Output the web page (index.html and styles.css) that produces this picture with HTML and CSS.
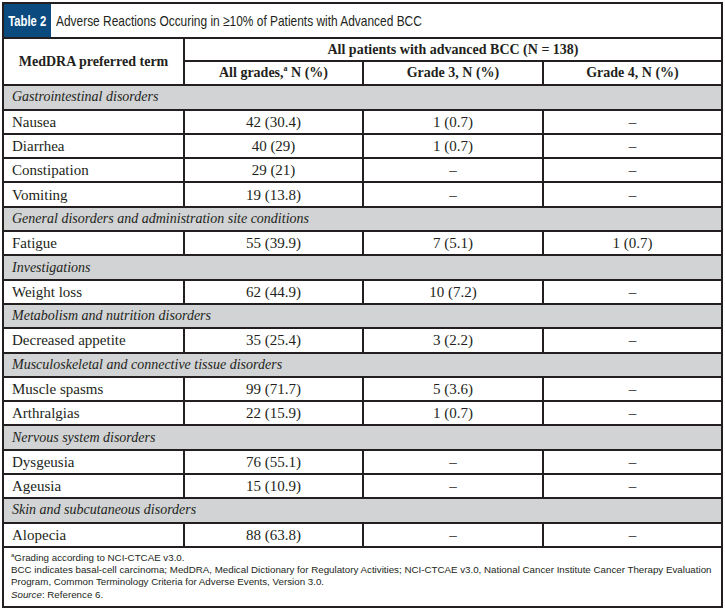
FILE: index.html
```html
<!DOCTYPE html>
<html>
<head>
<meta charset="utf-8">
<link rel="stylesheet" href="styles.css">
</head>
<body>
<div class="frame">
  <div class="title-row">
    <div class="tag"><span class="tag-text">Table 2</span></div>
    <div class="title"><span class="title-text">Adverse Reactions Occuring in ≥10% of Patients with Advanced BCC</span></div>
  </div>
  <table class="data">
    <colgroup>
      <col class="c1"><col class="c2"><col class="c3"><col class="c4">
    </colgroup>
    <thead>
      <tr>
        <th rowspan="2" class="term-head">MedDRA preferred term</th>
        <th colspan="3">All patients with advanced BCC (N = 138)</th>
      </tr>
      <tr>
        <th>All grades,<sup>a</sup> N (%)</th>
        <th>Grade 3, N (%)</th>
        <th>Grade 4, N (%)</th>
      </tr>
    </thead>
    <tbody>
      <tr class="group"><td colspan="4">Gastrointestinal disorders</td></tr>
      <tr><td>Nausea</td><td>42 (30.4)</td><td>1 (0.7)</td><td>–</td></tr>
      <tr><td>Diarrhea</td><td>40 (29)</td><td>1 (0.7)</td><td>–</td></tr>
      <tr><td>Constipation</td><td>29 (21)</td><td>–</td><td>–</td></tr>
      <tr><td>Vomiting</td><td>19 (13.8)</td><td>–</td><td>–</td></tr>
      <tr class="group"><td colspan="4">General disorders and administration site conditions</td></tr>
      <tr><td>Fatigue</td><td>55 (39.9)</td><td>7 (5.1)</td><td>1 (0.7)</td></tr>
      <tr class="group"><td colspan="4">Investigations</td></tr>
      <tr><td>Weight loss</td><td>62 (44.9)</td><td>10 (7.2)</td><td>–</td></tr>
      <tr class="group"><td colspan="4">Metabolism and nutrition disorders</td></tr>
      <tr><td>Decreased appetite</td><td>35 (25.4)</td><td>3 (2.2)</td><td>–</td></tr>
      <tr class="group"><td colspan="4">Musculoskeletal and connective tissue disorders</td></tr>
      <tr><td>Muscle spasms</td><td>99 (71.7)</td><td>5 (3.6)</td><td>–</td></tr>
      <tr><td>Arthralgias</td><td>22 (15.9)</td><td>1 (0.7)</td><td>–</td></tr>
      <tr class="group"><td colspan="4">Nervous system disorders</td></tr>
      <tr><td>Dysgeusia</td><td>76 (55.1)</td><td>–</td><td>–</td></tr>
      <tr><td>Ageusia</td><td>15 (10.9)</td><td>–</td><td>–</td></tr>
      <tr class="group"><td colspan="4">Skin and subcutaneous disorders</td></tr>
      <tr><td>Alopecia</td><td>88 (63.8)</td><td>–</td><td>–</td></tr>
    </tbody>
  </table>
  <div class="notes">
    <p><sup>a</sup>Grading according to NCI-CTCAE v3.0.</p>
    <p>BCC indicates basal-cell carcinoma; MedDRA, Medical Dictionary for Regulatory Activities; NCI-CTCAE v3.0, National Cancer Institute Cancer Therapy Evaluation Program, Common Terminology Criteria for Adverse Events, Version 3.0.</p>
    <p><em>Source</em>: Reference 6.</p>
  </div>
</div>
</body>
</html>
```

FILE: styles.css
```css
html, body {
  margin: 0;
  padding: 0;
  background: #ffffff;
}

.frame {
  margin: 2px 0 0 2px;
  width: 721px;
  box-sizing: border-box;
  border: 2px solid #231f20;
  color: #231f20;
}

.title-row {
  display: flex;
  align-items: stretch;
  height: 33px;
  border-bottom: 2px solid #231f20;
}

.tag {
  background: #0a4a7f;
  color: #ffffff;
  font-family: "Liberation Sans", sans-serif;
  font-weight: bold;
  font-size: 15px;
  width: 47px;
  flex: none;
  display: flex;
  align-items: center;
  justify-content: center;
  white-space: nowrap;
  overflow: hidden;
}

.tag-text {
  display: inline-block;
  transform: scaleX(0.75);
}

.title {
  font-family: "Liberation Sans", sans-serif;
  font-size: 15px;
  display: flex;
  align-items: center;
  padding-left: 5px;
  white-space: nowrap;
}

.title-text {
  display: inline-block;
  transform: scaleX(0.795);
  transform-origin: left center;
}

.data {
  width: 100%;
  border-collapse: collapse;
  table-layout: fixed;
  font-family: "Liberation Serif", serif;
  font-size: 15px;
}

.c1 { width: 180px; }
.c2 { width: 179px; }
.c3 { width: 180px; }
.c4 { width: 178px; }

.data th,
.data td {
  border: 2px solid #231f20;
  height: 22.3px;
  padding: 0 8px;
  line-height: 20px;
}

.data tr > :first-child { border-left: none; }
.data tr > :last-child { border-right: none; }
.data thead tr:first-child th { border-top: none; }

.data th {
  font-size: 14px;
  font-weight: bold;
  text-align: center;
}

.data thead tr:first-child th { height: 21px; }

.data th sup {
  font-size: 8px;
  line-height: 0;
}

.data td { text-align: center; }
.data td:first-child { text-align: left; }

.data .group td {
  background: #d1d3d4;
  font-style: italic;
  font-size: 14px;
  text-align: left;
}

.notes {
  font-family: "Liberation Sans", sans-serif;
  font-size: 9.75px;
  line-height: 12.2px;
  padding: 4px 6px 5px 7px;
  color: #231f20;
}

.notes p { margin: 0; }

.notes sup {
  font-size: 6px;
  line-height: 0;
}
```
